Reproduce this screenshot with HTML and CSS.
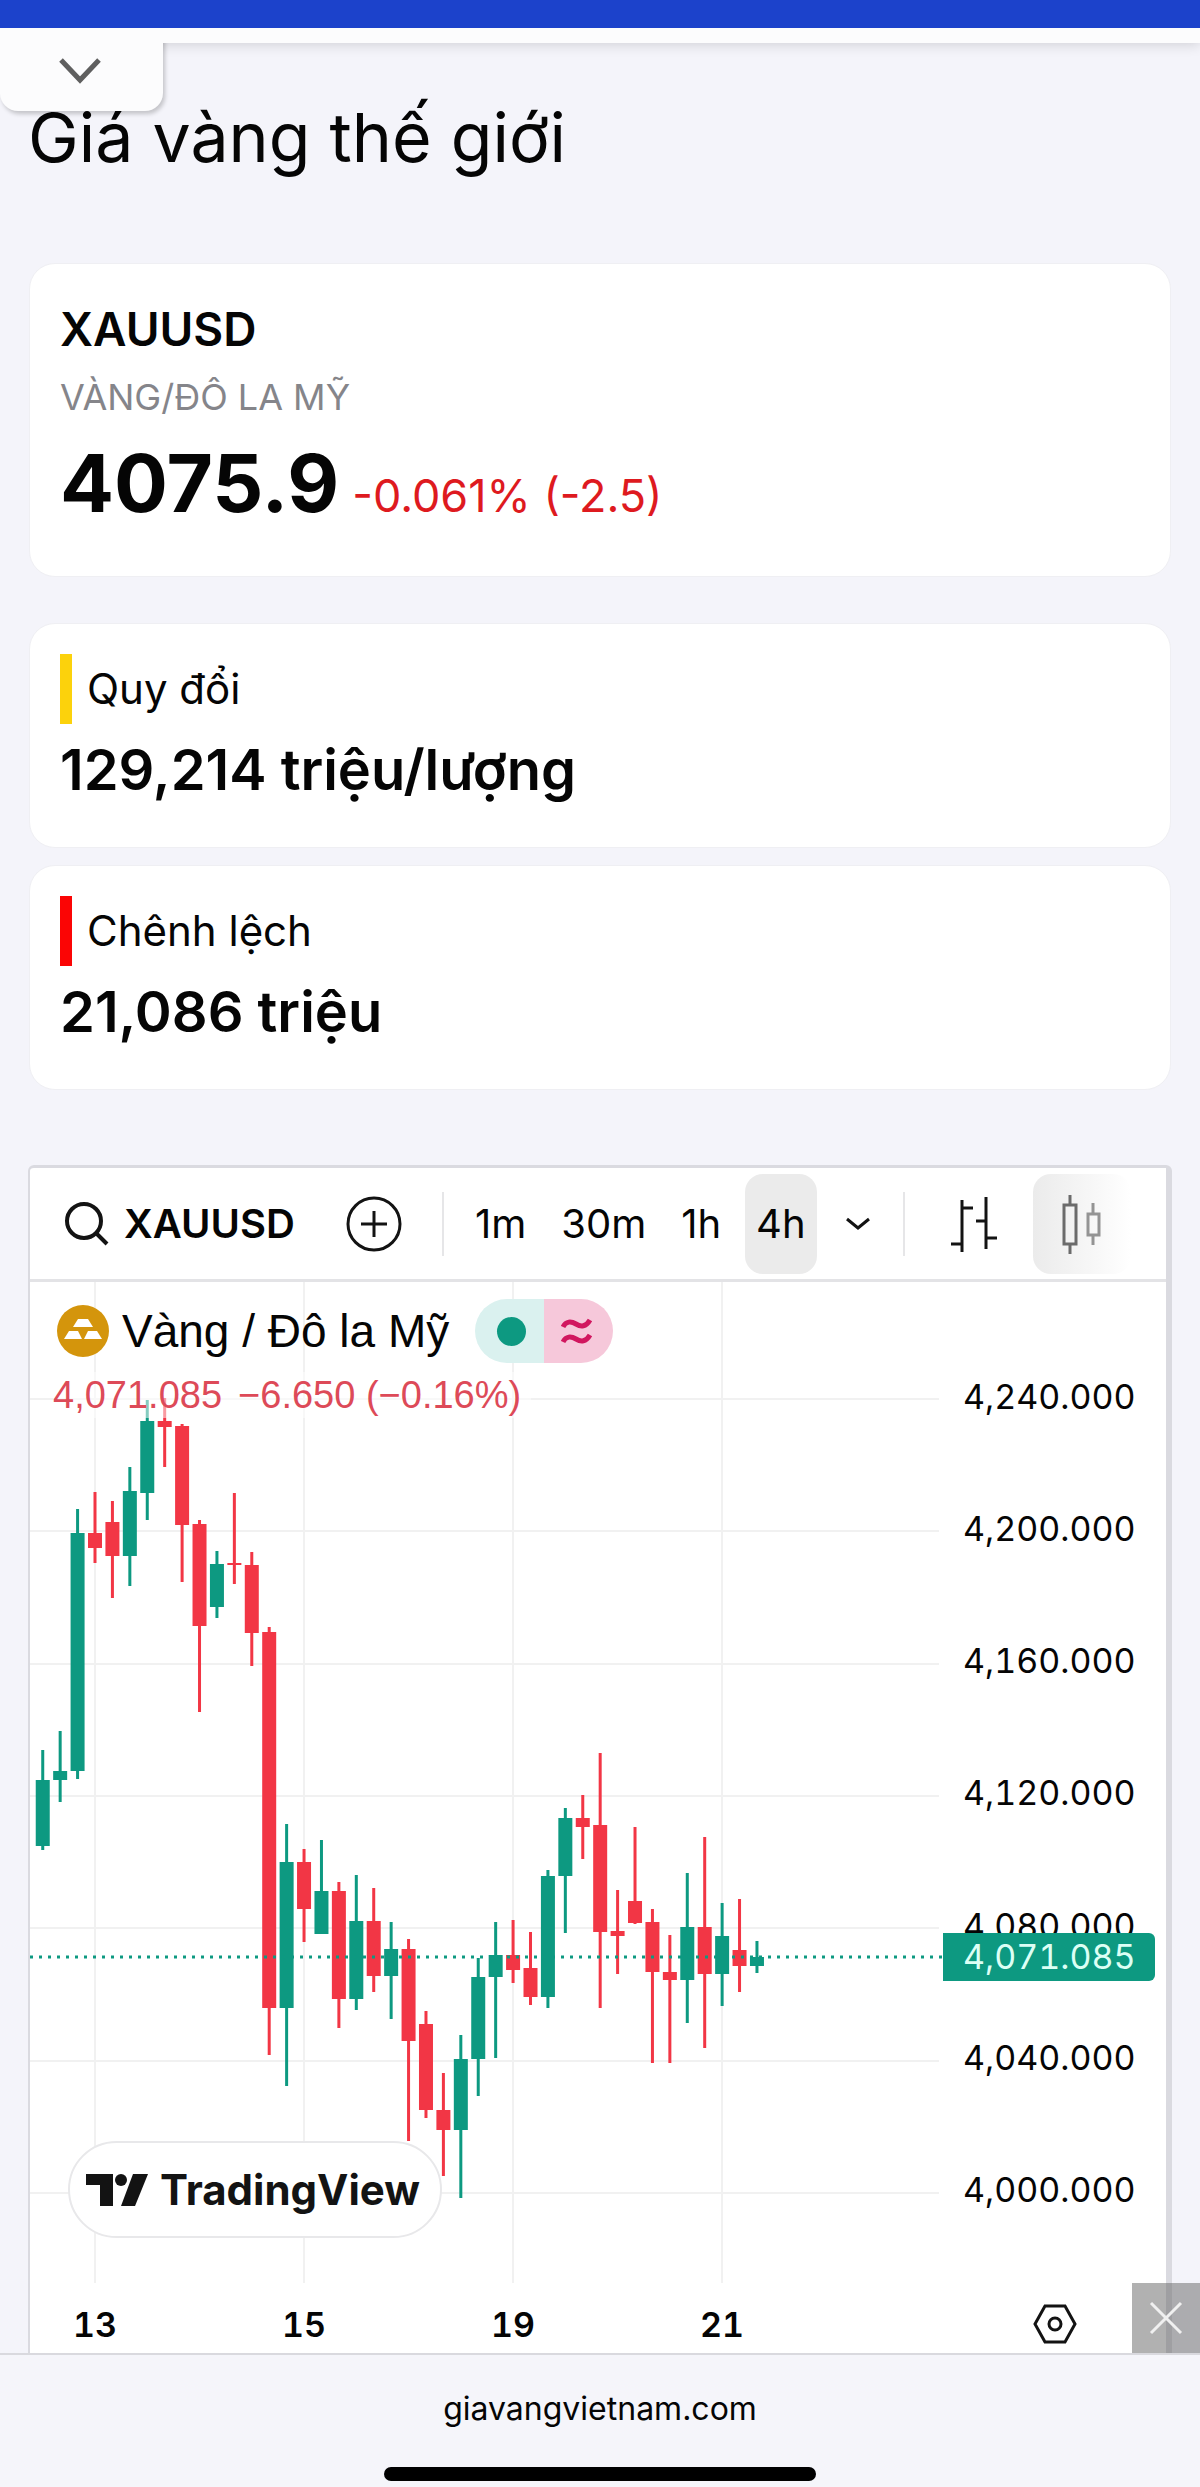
FILE: index.html
```html
<!DOCTYPE html>
<html lang="vi">
<head>
    <meta charset="UTF-8">
    <meta name="viewport" content="width=device-width, initial-scale=1.0">
    <title>Giá vàng thế giới</title>
    <link rel="stylesheet" href="styles.css">
</head>
<body>
    <header class="top-bar">
        <button class="collapse-btn" aria-label="Thu gọn">
            <svg width="44" height="28" viewBox="0 0 44 28"><path d="M3 4l19 20L41 4" fill="none" stroke="#5f5f5f" stroke-width="5"/></svg>
        </button>
    </header>

    <main class="content">
        <h1>Giá vàng thế giới</h1>

        <section class="card price-card">
            <h2 class="symbol">XAUUSD</h2>
            <p class="symbol-name">VÀNG/ĐÔ LA MỸ</p>
            <p class="price-row"><strong class="price">4075.9</strong><span class="change">-0.061% (-2.5)</span></p>
        </section>

        <section class="card stat-card">
            <h3 class="stat-label gold">Quy đổi</h3>
            <p class="stat-value">129,214 triệu/lượng</p>
        </section>
        <section class="card stat-card">
            <h3 class="stat-label red">Chênh lệch</h3>
            <p class="stat-value">21,086 triệu</p>
        </section>

        <!-- Biểu đồ -->
        <section class="widget">
            <div class="toolbar">
                <button class="tool search">
                    <svg width="46" height="46" viewBox="0 0 46 46" fill="none" stroke="#131313" stroke-width="4"><circle cx="20" cy="20" r="17"/><path d="M32 32l11 11"/></svg>
                    XAUUSD
                </button>
                <button class="tool add" aria-label="So sánh">
                    <svg width="56" height="56" viewBox="0 0 56 56" fill="none" stroke="#131313" stroke-width="3"><circle cx="28" cy="28" r="26"/><path d="M28 15v26M15 28h26"/></svg>
                </button>
                <span class="divider"></span>
                <div class="intervals">
                    <button class="tool">1m</button>
                    <button class="tool">30m</button>
                    <button class="tool">1h</button>
                    <button class="tool active">4h</button>
                </div>
                <button class="tool more" aria-label="Khung thời gian">
                    <svg width="26" height="16" viewBox="0 0 26 16"><path d="M2 3l11 9 11-9" fill="none" stroke="#131313" stroke-width="3"/></svg>
                </button>
                <span class="divider"></span>
                <button class="tool bars" aria-label="Thanh">
                    <svg width="46" height="56" viewBox="0 0 46 56" fill="none" stroke="#131313" stroke-width="3"><path d="M11 4v52M11 12h11M0 48h11M35 1v52M25 25h10M35 42h11"/></svg>
                </button>
                <button class="tool candles" aria-label="Nến">
                    <svg width="40" height="60" viewBox="0 0 40 60" fill="none" stroke="#6b6b6b" stroke-width="3"><path d="M2 11h12v39H2zM8 1v10M8 50v10"/><path stroke="#949494" d="M26 20h11v21H26zM31 9v11M31 41v10"/></svg>
                </button>
            </div>

            <div class="chart">
                <div class="plot">
                    <svg class="plot-svg" id="plot" viewBox="0 0 913 1001" preserveAspectRatio="xMinYMin slice"></svg>
                    <div class="legend">
                        <div class="legend-title">
                            <svg width="52" height="52" viewBox="0 0 52 52"><circle cx="26" cy="26" r="26" fill="#d4950c"/><path fill="#fff" d="M21 14h10l5 8H16zM12 26h9l4 8H7zM31 26h9l5 8H27z"/></svg>
                            <span>Vàng / Đô la Mỹ</span>
                            <span class="status">
                                <i class="open"><b class="dot"></b></i>
                                <i class="delay"><svg width="32" height="26" viewBox="0 0 32 26" fill="none" stroke="#d1175f" stroke-width="5"><path d="M2 9c3-6 8-6 13-3s10 3 14-4M2 24c3-6 8-6 13-3s10 3 14-4"/></svg></i>
                            </span>
                        </div>
                        <div class="legend-values"><span>4,071.085</span><span>−6.650 (−0.16%)</span></div>
                    </div>
                    <a class="tv-logo" href="#">
                        <svg width="62" height="32" viewBox="0 0 62 32" fill="#131313"><path d="M0 0h27v32H14V11H0z"/><circle cx="35" cy="6" r="6"/><path d="M47 0h15L49 32H35z"/></svg>
                        TradingView
                    </a>
                </div>
                <div class="price-axis">
                    <ul class="prices">
                        <li>4,240.000</li>
                        <li>4,200.000</li>
                        <li>4,160.000</li>
                        <li>4,120.000</li>
                        <li>4,080.000</li>
                        <li>4,040.000</li>
                        <li>4,000.000</li>
                    </ul>
                    <span class="last-price">4,071.085</span>
                </div>
                <div class="time-axis">
                    <span>13</span><span>15</span><span>19</span><span>21</span>
                </div>
                <button class="settings" aria-label="Cài đặt">
                    <svg width="44" height="40" viewBox="0 0 44 40" fill="none" stroke="#131313" stroke-width="3"><path d="M12 2h20l10 18-10 18H12L2 20z"/><circle cx="22" cy="20" r="6"/></svg>
                </button>
            </div>
        </section>

        <button class="close-btn" aria-label="Đóng">
            <svg width="34" height="34" viewBox="0 0 34 34"><path d="M2 2l30 30M32 2L2 32" stroke="#f0f0f0" stroke-width="3"/></svg>
        </button>
    </main>

    <footer class="browser-bar">
        <a href="#">giavangvietnam.com</a>
        <div class="home-indicator"></div>
    </footer>

    <script>
        // màu, cao nhất, đỉnh thân, đáy thân, thấp nhất
        const nen = [
            ['g', 468, 498, 564, 568], ['g', 449, 489, 498, 520], ['g', 227, 251, 489, 497],
            ['r', 210, 251, 266, 281], ['r', 219, 240, 274, 316], ['g', 185, 209, 274, 304],
            ['g', 118, 139, 211, 238], ['r', 116, 139, 145, 185], ['r', 142, 144, 243, 300],
            ['r', 238, 242, 344, 430], ['g', 269, 282, 325, 336], ['r', 211, 281, 283, 302],
            ['r', 270, 283, 351, 384], ['r', 345, 350, 726, 773], ['g', 542, 580, 726, 804],
            ['r', 567, 580, 627, 660], ['g', 558, 609, 652, 652], ['r', 600, 609, 717, 746],
            ['g', 593, 639, 717, 728], ['r', 606, 639, 694, 710], ['g', 640, 667, 694, 737],
            ['r', 657, 667, 759, 859], ['r', 729, 742, 828, 836], ['r', 791, 828, 848, 894],
            ['g', 753, 777, 848, 916], ['g', 676, 695, 777, 814], ['g', 640, 673, 695, 776],
            ['r', 638, 673, 688, 701], ['r', 650, 686, 715, 723], ['g', 588, 594, 715, 726],
            ['g', 526, 536, 594, 651], ['r', 513, 536, 545, 577], ['r', 471, 543, 650, 726],
            ['r', 608, 649, 654, 692], ['r', 545, 619, 641, 642], ['r', 627, 640, 690, 781],
            ['r', 653, 690, 698, 781], ['g', 591, 645, 698, 741], ['r', 555, 645, 692, 766],
            ['g', 621, 654, 692, 724], ['r', 617, 668, 684, 710], ['g', 659, 675, 684, 691]
        ];
        const mau = { g: '#0d9981', r: '#f23645' };
        let ve = '';

        // Lưới
        for (let i = 0; i < 7; i++) {
            const y = Math.round(117 + i * 132.33);
            ve += `<path d="M0 ${y}H909" stroke="#f1f1f1" stroke-width="2"/>`;
        }
        for (let i = 0; i < 4; i++) {
            ve += `<path d="M${65 + i * 209} 0V1001" stroke="#f1f1f1" stroke-width="2"/>`;
        }

        // Nến
        nen.forEach(([c, cao, dinh, day, thap], i) => {
            const x = 65 + (i - 3) * 17.42;
            ve += `<rect x="${x - 1.5}" y="${cao}" width="3" height="${thap - cao}" fill="${mau[c]}"/>`;
            ve += `<rect x="${x - 7}" y="${dinh}" width="14" height="${day - dinh}" fill="${mau[c]}"/>`;
        });

        // Giá hiện tại
        ve += '<path d="M0 675H913" stroke="#0d9981" stroke-width="3" stroke-dasharray="3 6"/>';
        document.getElementById('plot').innerHTML = ve;
    </script>
</body>
</html>
```
FILE: styles.css
```css
* {
    box-sizing: border-box;
}
body {
    margin: 0;
    font-family: Inter, 'Noto Sans', sans-serif;
    background-color: #f4f4fa;
    color: #050505;
}
h1, h2, h3, p, ul {
    margin: 0;
    padding: 0;
    font-weight: 400;
}
button {
    border: none;
    background: none;
    padding: 0;
    font-family: inherit;
    color: inherit;
    cursor: pointer;
}
a {
    color: inherit;
    text-decoration: none;
}
svg {
    display: block;
    flex-shrink: 0;
}

/* Thanh trên cùng */
.top-bar {
    position: relative;
    z-index: 1;
    height: 43px;
    border-top: 28px solid #1c42cb;
    background-color: #fcfcfd;
    box-shadow: 0 2px 12px rgba(0, 0, 0, 0.14);
}
.collapse-btn {
    position: absolute;
    top: 0;
    left: 0;
    display: flex;
    justify-content: center;
    width: 163px;
    height: 83px;
    padding: 28px 3px 0 0;
    background-color: #fcfcfd;
    border-radius: 0 0 18px 18px;
    box-shadow: 2px 3px 4px rgba(0, 0, 0, 0.2);
    clip-path: inset(15px -10px -10px 0);
}

.content {
    position: relative;
    padding: 52px 28px 0;
}
h1 {
    font-size: 68px;
    line-height: 84px;
    margin-bottom: 84px;
}

/* Thẻ giá */
.card {
    margin: 0 1px;
    background-color: #fff;
    border: 1px solid #efeff3;
    border-radius: 26px;
    padding: 30px;
}
.price-card {
    height: 314px;
    padding-top: 35px;
    margin-bottom: 46px;
}
.symbol {
    font-size: 46px;
    line-height: 60px;
    font-weight: 600;
}
.symbol-name {
    font-size: 36px;
    line-height: 56px;
    margin-top: 10px;
    color: #85858a;
}
.price-row {
    display: flex;
    align-items: baseline;
    gap: 13px;
    line-height: 96px;
    margin-top: 10px;
}
.price {
    font-size: 80px;
    font-weight: 700;
}
.change {
    font-size: 45px;
    color: #de1a1f;
}
.stat-card {
    height: 225px;
    margin-bottom: 17px;
}
.stat-label {
    font-size: 42px;
    line-height: 70px;
    padding-left: 15px;
    border-left: 12px solid #fcd20c;
}
.stat-label.red {
    border-color: #fb0505;
}
.stat-value {
    font-size: 56px;
    line-height: 68px;
    margin-top: 12px;
    font-weight: 600;
}

/* Biểu đồ */
.widget {
    margin-top: 75px;
    border: 3px solid #dadae0;
    border-left-width: 2px;
    border-right-width: 6px;
    border-bottom: none;
    border-radius: 6px 6px 0 0;
    background-color: #fff;
    overflow: hidden;
}
.toolbar {
    display: flex;
    align-items: center;
    height: 114px;
    padding: 0 30px 0 34px;
    border-bottom: 3px solid #e3e3e6;
}
.tool {
    display: flex;
    align-items: center;
    justify-content: center;
    height: 100px;
    font-size: 40px;
    flex-shrink: 0;
}
.search {
    gap: 14px;
    font-weight: 600;
}
.add {
    margin-left: 51px;
}
.divider {
    flex-shrink: 0;
    width: 2px;
    height: 64px;
    margin-left: 40px;
    background-color: #e6e6e8;
}
.intervals {
    display: flex;
    gap: 13px;
    margin-left: 20px;
}
.intervals .tool {
    padding: 0 11px;
}
.active {
    background-color: #ebebeb;
    border-radius: 18px;
}
.more {
    margin-left: 28px;
}
.more + .divider {
    margin-left: 32px;
}
.bars {
    margin-left: 46px;
}
.candles {
    width: 98px;
    margin-left: 36px;
    border-radius: 18px;
    background: linear-gradient(to right, #ebebeb, #fff);
}
.chart {
    display: grid;
    grid-template-columns: 1fr 223px;
    grid-template-rows: 1001px 70px;
}
.plot {
    position: relative;
    overflow: hidden;
}
.plot-svg {
    width: 100%;
    height: 100%;
}
.legend {
    position: absolute;
    top: 17px;
    left: 23px;
    font-family: 'Liberation Sans', Arial, sans-serif;
}
.legend-title {
    display: flex;
    align-items: center;
    gap: 13px;
    height: 64px;
    padding-left: 4px;
    font-size: 46px;
}
.status {
    display: flex;
    width: 138px;
    height: 64px;
    margin-left: 13px;
    border-radius: 32px;
    overflow: hidden;
}
.status i {
    display: flex;
    flex: 1;
    align-items: center;
    justify-content: center;
}
.open {
    padding-left: 4px;
    background-color: #daf1ef;
}
.delay {
    padding-right: 4px;
    background-color: #f6c8da;
}
.dot {
    width: 29px;
    height: 29px;
    border-radius: 50%;
    background-color: #0d9981;
}
.legend-values {
    display: flex;
    gap: 16px;
    width: max-content;
    padding-right: 10px;
    margin-top: 9px;
    font-size: 38px;
    line-height: 46px;
    color: #dd4a58;
    background-color: rgba(255, 255, 255, 0.5);
}
.tv-logo {
    position: absolute;
    left: 38px;
    bottom: 45px;
    display: flex;
    align-items: center;
    gap: 12px;
    height: 97px;
    padding: 0 20px 0 16px;
    border: 2px solid #e8e8ea;
    border-radius: 49px;
    background-color: #fff;
    font-size: 42px;
    font-weight: 700;
    color: #131313;
}
.price-axis {
    position: relative;
    font-size: 34px;
    font-variant-numeric: tabular-nums;
}
.prices {
    list-style: none;
    display: flex;
    flex-direction: column;
    height: 926px;
    margin-top: 48px;
    padding-left: 20px;
}
.prices li {
    flex: 1;
    display: flex;
    align-items: center;
}
.last-price {
    position: absolute;
    top: 651px;
    left: 0;
    width: 212px;
    padding-left: 20px;
    line-height: 48px;
    border-radius: 0 6px 6px 0;
    background-color: #0d9981;
    color: #dcfff5;
}
.time-axis {
    display: flex;
    padding-left: 25px;
    gap: 129px;
    font-size: 34px;
    font-weight: 600;
    font-variant-numeric: tabular-nums;
    line-height: 84px;
}
.time-axis span {
    width: 80px;
    text-align: center;
}
.settings {
    display: flex;
    padding: 21px 0 0 90px;
}
.close-btn {
    position: absolute;
    right: 0;
    bottom: 0;
    display: flex;
    align-items: center;
    justify-content: center;
    width: 68px;
    height: 70px;
    background-color: rgba(100, 100, 100, 0.5);
}

/* Thanh dưới cùng */
.browser-bar {
    display: flex;
    flex-direction: column;
    align-items: center;
    padding: 31px 0 6px;
    border-top: 2px solid #d9d9de;
    background-color: #f5f5fa;
    font-size: 32px;
    line-height: 46px;
}
.home-indicator {
    width: 36%;
    height: 14px;
    margin-top: 35px;
    border-radius: 7px;
    background-color: #000;
}
```
